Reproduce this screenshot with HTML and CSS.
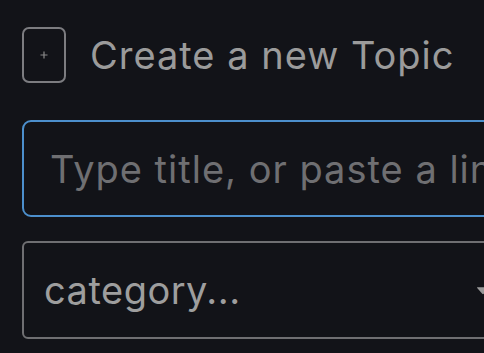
FILE: index.html
```html
<!DOCTYPE html>
<html>
<head>
<meta charset="utf-8">
<link rel="stylesheet" href="styles.css">
</head>
<body>
<div class="page">
  <div class="header">
    <div class="add-box">
      <svg width="8" height="8" viewBox="0 0 8 8"><path d="M4 0.5V7.5M0.5 4H7.5" stroke="#8a8a8a" stroke-width="1.2"/></svg>
    </div>
    <h1 class="title">Create a new Topic</h1>
  </div>
  <div class="field title-field">
    <span class="placeholder">Type title, or paste a link here</span>
  </div>
  <div class="field select-field">
    <span class="select-value">category...</span>
    <svg class="caret" width="14" height="9" viewBox="0 0 14 9"><path d="M1.5 1.2 Q0.6 1.2 1.2 2 L6.2 7.8 Q7 8.6 7.8 7.8 L12.8 2 Q13.4 1.2 12.5 1.2 Z" fill="#9a9a9a"/></svg>
  </div>
</div>
</body>
</html>
```
FILE: styles.css
```css
html, body {
  margin: 0;
  padding: 0;
  background: #121318;
  overflow: hidden;
}
body {
  font-family: Inter, "Open Sans", sans-serif;
}
.page {
  width: 488px;
  padding: 27px 0 0 22px;
  display: flex;
  flex-direction: column;
}
.header {
  display: flex;
  align-items: center;
  gap: 24px;
  height: 56px;
}
.add-box {
  width: 44px;
  height: 56px;
  box-sizing: border-box;
  border: 2px solid #7c7c80;
  border-radius: 7px;
  display: flex;
  align-items: center;
  justify-content: center;
  flex: none;
}
.add-box svg { display: block; }
.title {
  margin: 0;
  font-size: 38px;
  font-weight: 400;
  color: #9b9b9b;
  white-space: nowrap;
  letter-spacing: 1px;
}
.field {
  box-sizing: border-box;
  height: 97px;
  display: flex;
  align-items: center;
  white-space: nowrap;
  overflow: hidden;
}
.title-field {
  margin-top: 37px;
  border: 2px solid #4c8fcc;
  border-radius: 9px;
  padding-left: 26px;
}
.placeholder {
  font-size: 38px;
  color: #6f6f72;
  letter-spacing: 1px;
}
.select-field {
  margin-top: 24px;
  height: 98px;
  border: 2px solid #6f6f72;
  border-radius: 6px;
  padding-left: 20px;
  padding-right: 18px;
  justify-content: space-between;
}
.select-value {
  font-size: 38px;
  color: #9e9e9e;
  letter-spacing: 0.5px;
}
.caret { flex: none; display: block; }
```
